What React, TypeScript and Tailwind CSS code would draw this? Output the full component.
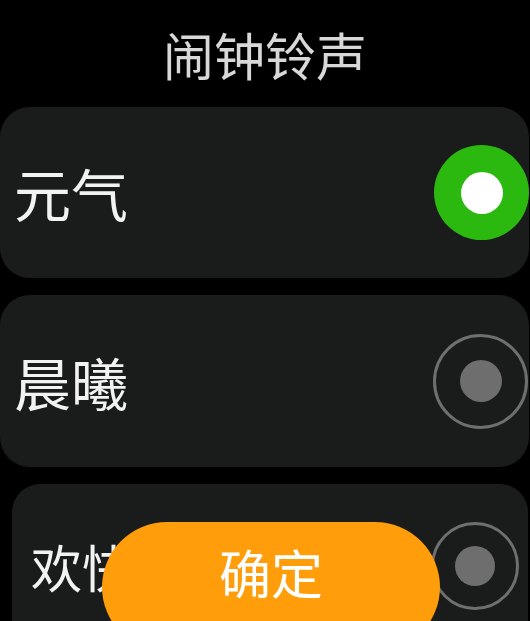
import React from 'react'

const FONT = { fontFamily: '"Noto Sans CJK SC", "Noto Sans", sans-serif' }

interface Ring {
  name: string
  selected?: boolean
}

const rings: Ring[] = [
  { name: '元气', selected: true },
  { name: '晨曦' },
  { name: '欢快' },
]

function Radio({ selected, small }: { selected?: boolean; small?: boolean }) {
  if (selected) {
    return (
      <div className="flex h-[95px] w-[95px] items-center justify-center rounded-full bg-[#2bb80f]">
        <div className="h-[42px] w-[42px] rounded-full bg-white" />
      </div>
    )
  }
  return (
    <div
      className={
        small
          ? 'flex h-[88px] w-[88px] items-center justify-center rounded-full border-[3px] border-[#6f6f6f]'
          : 'flex h-[95px] w-[95px] items-center justify-center rounded-full border-[3px] border-[#6f6f6f]'
      }
    >
      <div className={small ? 'h-[40px] w-[40px] rounded-full bg-[#6e6e6e]' : 'h-[42px] w-[42px] rounded-full bg-[#6e6e6e]'} />
    </div>
  )
}

export default function App() {
  return (
    <div className="relative h-[621px] w-[530px] overflow-hidden bg-black" style={FONT}>
      {/* title */}
      <div className="flex h-[107px] items-start justify-center pt-[19px]">
        <span className="text-[51px] leading-[70px] text-[#d8d8d8]">闹钟铃声</span>
      </div>

      {/* ring list */}
      <div className="flex flex-col gap-[17px]">
        <div className="flex h-[171px] w-[529px] items-center justify-between rounded-[30px] bg-[#1a1b1b] pl-[14px] pr-0">
          <span className="text-[57px] leading-none text-[#f2f2f2]">{rings[0].name}</span>
          <Radio selected />
        </div>
        <div className="flex h-[172px] w-[529px] items-center justify-between rounded-[30px] bg-[#1a1b1b] pl-[14px] pr-[1px]">
          <span className="text-[57px] leading-none text-[#f2f2f2]">{rings[1].name}</span>
          <Radio />
        </div>
        <div className="ml-[12px] flex h-[164px] w-[516px] items-center justify-between rounded-[28px] bg-[#1a1b1b] pl-[19px] pr-[9px]">
          <span className="text-[51px] leading-none text-[#f2f2f2]">{rings[2].name}</span>
          <Radio small />
        </div>
      </div>

      {/* confirm button */}
      <button className="absolute left-[102px] top-[522px] flex h-[130px] w-[338px] items-start justify-center rounded-full bg-[#ff9d0a] pt-[15px]">
        <span className="text-[52px] leading-[70px] text-white">确定</span>
      </button>
    </div>
  )
}
